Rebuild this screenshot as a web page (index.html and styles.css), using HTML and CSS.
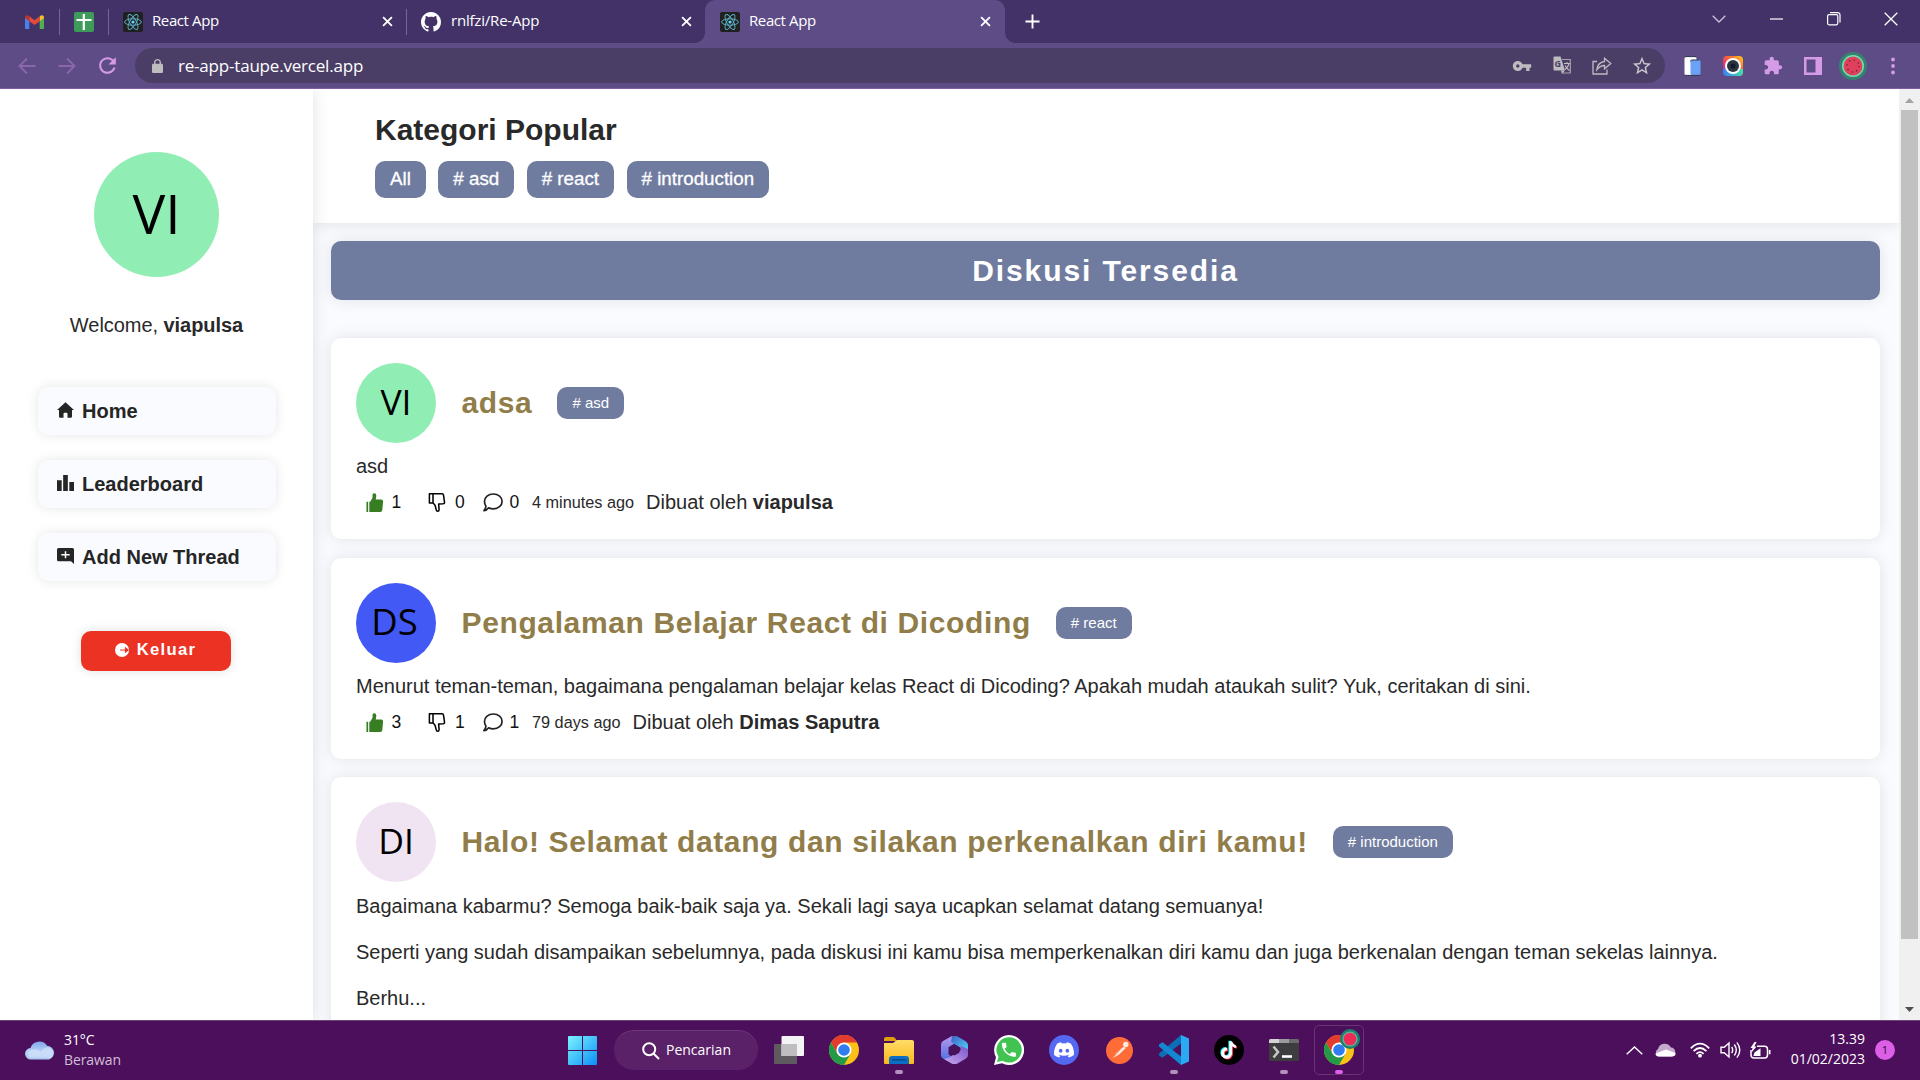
FILE: index.html
```html
<!DOCTYPE html>
<html lang="id">
<head>
<meta charset="utf-8">
<title>React App</title>
<link rel="stylesheet" href="styles.css">
</head>
<body>
<svg class="defs" width="0" height="0" aria-hidden="true">
  <defs>
    <linearGradient id="win" x1="0" y1="0" x2="1" y2="1"><stop offset="0" stop-color="#7df3ff"/><stop offset="1" stop-color="#0a8ff5"/></linearGradient>
    <linearGradient id="folder" x1="0" y1="0" x2="0" y2="1"><stop offset="0" stop-color="#ffdc69"/><stop offset="1" stop-color="#fbb81a"/></linearGradient>
    <linearGradient id="cloud" x1="0" y1="0" x2="0" y2="1"><stop offset="0" stop-color="#7fa6ef"/><stop offset=".55" stop-color="#b9d3f5"/><stop offset="1" stop-color="#a9c6f3"/></linearGradient>
    <linearGradient id="officeA" x1="0" y1="0" x2="0" y2="1"><stop offset="0" stop-color="#b79af0"/><stop offset="1" stop-color="#4b6fe0"/></linearGradient>
    <linearGradient id="officeB" x1="0" y1="0" x2="1" y2="1"><stop offset="0" stop-color="#3c62c8"/><stop offset="1" stop-color="#52d6fa"/></linearGradient>
    <linearGradient id="officeC" x1="0" y1="1" x2="1" y2="0"><stop offset="0" stop-color="#c9a8f2"/><stop offset="1" stop-color="#7a56c8"/></linearGradient>
    <linearGradient id="cam" x1="0" y1="1" x2="1" y2="0"><stop offset="0" stop-color="#7a3df0"/><stop offset=".35" stop-color="#e8356a"/><stop offset=".7" stop-color="#ff7a2a"/><stop offset="1" stop-color="#ffd21f"/></linearGradient>
    <linearGradient id="camB" x1="0" y1="0" x2="1" y2="0"><stop offset="0" stop-color="#3d7df5"/><stop offset="1" stop-color="#3fe0a8"/></linearGradient>
    <symbol id="react" viewBox="0 0 20 20">
      <rect width="20" height="20" rx="2" fill="#202020"/>
      <g fill="none" stroke="#5fb9d0" stroke-width=".9"><ellipse cx="10" cy="10" rx="8.4" ry="3.2"/><ellipse cx="10" cy="10" rx="8.4" ry="3.2" transform="rotate(60 10 10)"/><ellipse cx="10" cy="10" rx="8.4" ry="3.2" transform="rotate(120 10 10)"/></g>
      <circle cx="10" cy="10" r="1.6" fill="#61dafb"/>
    </symbol>
    <symbol id="close" viewBox="0 0 12 12"><path d="M1.2 1.2l9.6 9.6M10.8 1.2l-9.6 9.6" stroke="#fff" stroke-width="2" fill="none"/></symbol>
    <symbol id="chrome" viewBox="0 0 30 30">
      <circle cx="15" cy="15" r="15" fill="#fbc116"/>
      <path d="M2 7.5A15 15 0 0 1 28 7.5H15L8.5 18.8z" fill="#e33b2e"/>
      <path d="M2 7.5A15 15 0 0 0 15 30L21.5 18.8 8.5 18.8z" fill="#229a48"/>
      <circle cx="15" cy="15" r="7.6" fill="#fff"/><circle cx="15" cy="15" r="5.8" fill="#2f7df0"/>
    </symbol>
    <symbol id="note" viewBox="0 0 15 18"><path fill="currentColor" d="M9 0h2c.15.7.5 1.6 1.2 2.5C12.900 3.400 13.800 4 15 4v2.500c-1.700 0-3-.8-4-1.800V12a5.500 5.500 0 1 1-5-5.500V9.300A2.600 2.600 0 1 0 8.200 12V0z"/></symbol>
    <symbol id="thumb-up" viewBox="0 0 18 20"><path d="M0 9.2h1.8V20H0zM3 9.2h.9L6.4 5V2.1Q6.4.3 8 .3q2.4 0 2.4 2.6L9.8 6.8h5.700q2.200 0 2 2.200l-.8 8.900q-.3 2.100-2.100 2.100H3z" fill="#377e22"/></symbol>
    <symbol id="thumb-down" viewBox="0 0 18 20"><path d="M1 .9h13.200q1.500 0 1.700 1.500l1 7.200q.2 1.700-1.500 1.800l-4.700.1.500 5.800q0 1.900-1.500 1.900-1.200 0-1.500-1.400l-1-4.100q-.4-1.600-2.200-3.100H1zM4.800.9v9.700" fill="none" stroke="#000" stroke-width="1.600" stroke-linejoin="round"/></symbol>
    <symbol id="comment" viewBox="0 0 20 19"><path d="M10.3 1c5 0 8.800 3.200 8.800 7.400s-3.800 7.500-8.800 7.500c-1.700 0-3.300-.4-4.600-1.100C4.500 16.400 2.800 17.500.9 17.700c1.300-1.400 1.900-3 2-4.600C2 11.800 1.500 10.200 1.500 8.400 1.500 4.200 5.300 1 10.300 1z" fill="none" stroke="#222" stroke-width="1.700" stroke-linejoin="round"/></symbol>
  </defs>
</svg>

<header class="browser">
  <div class="tabstrip">
    <div class="pin pin-mail">
      <svg width="19" height="14" viewBox="0 0 19 14"><path d="M0 2v12h4.300V5.500z" fill="#4a80ec"/><path d="M19 2v12h-4.300V5.500z" fill="#4fae50"/><path d="M14.700 1.300Q17-.8 18.600 1q.4.6.4 2l-4.300 3.200z" fill="#f5bf2e"/><path d="M4.300 1.300Q2-.8.400 1 0 1.600 0 3l4.300 3.200z" fill="#b9352c"/><path d="M4.300 1.300l5.200 3.900 5.200-3.900v4.900L9.500 10.100 4.300 6.200z" fill="#e34a3c"/></svg>
    </div>
    <div class="pin pin-sheet">
      <svg width="20" height="20" viewBox="0 0 20 20"><rect width="20" height="20" rx="2" fill="#3f9b5a"/><path d="M9.800 2v16M2.500 8h15" stroke="#fff" stroke-width="2.200"/></svg>
    </div>
    <div class="tab tab-a">
      <svg class="favicon"><use href="#react"/></svg><span class="tab-title">React App</span><svg class="tab-close"><use href="#close"/></svg>
    </div>
    <div class="tab tab-b">
      <svg class="favicon" viewBox="0 0 16 16"><path fill="#fff" d="M8 0C3.580 0 0 3.580 0 8c0 3.540 2.290 6.530 5.470 7.590.4.070.55-.17.55-.38 0-.19-.01-.82-.01-1.490-2.010.37-2.530-.49-2.690-.94-.09-.23-.48-.94-.82-1.130-.28-.15-.68-.52-.01-.53.63-.01 1.080.58 1.230.82.72 1.210 1.870.87 2.330.66.070-.52.280-.87.510-1.070-1.780-.2-3.640-.89-3.640-3.950 0-.87.310-1.590.820-2.150-.080-.2-.36-1.020.080-2.120 0 0 .67-.21 2.200.820.640-.18 1.320-.27 2-.27s1.360.09 2 .27c1.530-1.040 2.200-.82 2.200-.82.440 1.100.160 1.920.080 2.120.510.560.820 1.270.820 2.150 0 3.070-1.870 3.750-3.650 3.950.290.250.540.730.540 1.480 0 1.070-.01 1.930-.01 2.200 0 .21.150.46.550.38A8.010 8.010 0 0 0 16 8c0-4.420-3.580-8-8-8z"/></svg><span class="tab-title">rnlfzi/Re-App</span><svg class="tab-close"><use href="#close"/></svg>
    </div>
    <div class="tab tab-active">
      <svg class="favicon"><use href="#react"/></svg><span class="tab-title">React App</span><svg class="tab-close"><use href="#close"/></svg>
    </div>
    <svg class="new-tab" viewBox="0 0 16 16"><path d="M8 .5v15M.5 8h15" stroke="#fff" stroke-width="2"/></svg>
    <div class="window-controls">
      <span><svg width="14" height="8" viewBox="0 0 14 8"><path d="M.7.700L7 7 13.300.700" stroke="#c9c1dc" stroke-width="1.300" fill="none"/></svg></span>
      <span><svg width="13" height="2" viewBox="0 0 13 2"><path d="M0 1h13" stroke="#fff" stroke-width="1.200"/></svg></span>
      <span><svg width="14" height="14" viewBox="0 0 14 14"><rect x=".6" y="2.600" width="10.200" height="10.200" rx="1.500" fill="none" stroke="#fff" stroke-width="1.200"/><path d="M3 .6h7.500Q13 .6 13 3v7.500" fill="none" stroke="#fff" stroke-width="1.200"/></svg></span>
      <span><svg width="14" height="14" viewBox="0 0 14 14"><path d="M.7.700l12.600 12.600M13.300.700L.7 13.300" stroke="#fff" stroke-width="1.300"/></svg></span>
    </div>
  </div>
  <div class="toolbar">
    <div class="nav-buttons">
      <span><svg width="18" height="18" viewBox="0 0 18 18"><path d="M17.500 9H2M9 1.500L1.500 9 9 16.500" fill="none" stroke="#8a66ab" stroke-width="1.900"/></svg></span>
      <span><svg width="18" height="18" viewBox="0 0 18 18"><path d="M.5 9H16M9 1.500L16.500 9 9 16.500" fill="none" stroke="#8a66ab" stroke-width="1.900"/></svg></span>
      <span><svg width="25" height="25" viewBox="0 0 24 24"><path fill="#d59be6" d="M17.650 6.350C16.200 4.900 14.210 4 12 4c-4.420 0-7.990 3.580-7.990 8s3.570 8 7.990 8c3.730 0 6.840-2.550 7.730-6h-2.080c-.82 2.330-3.040 4-5.650 4-3.310 0-6-2.690-6-6s2.690-6 6-6c1.660 0 3.140.69 4.220 1.780L13 11h7V4l-2.350 2.350z"/></svg></span>
    </div>
    <div class="omnibox">
      <svg width="11" height="14" viewBox="4 1 16 21" preserveAspectRatio="none"><path fill="#bdbdbd" d="M18 8h-1V6c0-2.760-2.240-5-5-5S7 3.240 7 6v2H6c-1.100 0-2 .9-2 2v10c0 1.100.9 2 2 2h12c1.100 0 2-.9 2-2V10c0-1.100-.9-2-2-2zM9 8V6c0-1.660 1.340-3 3-3s3 1.340 3 3v2z"/></svg>
      <span class="url">re-app-taupe.vercel.app</span>
      <div class="omni-actions">
        <span><svg width="20" height="20" viewBox="0 0 24 24"><path fill="#bfbcc0" d="M12.650 10C11.830 7.670 9.610 6 7 6c-3.310 0-6 2.690-6 6s2.690 6 6 6c2.610 0 4.830-1.670 5.650-4H17v4h4v-4h2v-4H12.650zM7 14c-1.100 0-2-.9-2-2s.9-2 2-2 2 .9 2 2-.9 2-2 2z"/></svg></span>
        <span><svg width="19" height="19" viewBox="0 0 19 19"><path d="M9 3.500h8.300V17H9.500" fill="none" stroke="#a5a1ab" stroke-width="1.200"/><path d="M1.500.5h6L12 14.500H1.500q-1 0-1-1v-12q0-1 1-1z" fill="#bfbcc0"/><path d="M8 14.500h4l-3 3.500z" fill="#bfbcc0"/><text class="g-mark" x="1.500" y="10.500">G</text><path d="M11 7.500h6M14 6v1.500M16 7.500q-1 4-4 6M12 9.500q1.500 3 4.500 5" stroke="#bfbcc0" stroke-width="1.100" fill="none"/></svg></span>
        <span><svg width="20" height="18" viewBox="0 0 20 18"><path d="M5 4.500H1V17h14v-4.500" fill="none" stroke="#bfbcc0" stroke-width="1.300"/><path d="M12.500 1.200L18.800 6.500l-6.300 5.300V8.500Q8 8.500 4.800 12.800 5.500 5.500 12.500 4.500z" fill="none" stroke="#bfbcc0" stroke-width="1.300"/></svg></span>
        <span><svg width="22" height="22" viewBox="0 0 24 24"><path fill="#c9c6cb" d="M22 9.240l-7.190-.62L12 2 9.190 8.630 2 9.240l5.460 4.730L5.820 21 12 17.270 18.180 21l-1.630-7.030L22 9.240zM12 15.400l-3.760 2.270 1-4.280-3.320-2.880 4.380-.38L12 6.100l1.710 4.040 4.380.38-3.320 2.880 1 4.280L12 15.400z"/></svg></span>
      </div>
    </div>
    <div class="extensions">
      <span><svg width="17" height="20" viewBox="0 0 17 20"><rect x=".5" y="1" width="12" height="18" rx="1.500" fill="#fff"/><path d="M1 .6h11" stroke="#343b52" stroke-width="1"/><rect x="6.500" y="4" width="10" height="15" rx="1.500" fill="#6ba2f5"/><path d="M6.500 5.500q0-1.500 1.500-1.500h7" stroke="#343b52" fill="none"/><path d="M1 19.400h15" stroke="#343b52"/></svg></span>
      <span><svg width="20" height="20" viewBox="0 0 20 20"><rect width="20" height="20" rx="4" fill="url(#cam)"/><path d="M0 13h20v3q0 4-4 4H4q-4 0-4-4z" fill="url(#camB)"/><circle cx="10" cy="10" r="8" fill="#fff"/><circle cx="10" cy="10" r="6" fill="#2d3440"/><circle cx="10" cy="10" r="2.500" fill="#121b2a"/></svg></span>
      <span><svg width="20" height="20" viewBox="0 0 24 24"><path fill="#d59be6" d="M20.500 11H19V7c0-1.100-.9-2-2-2h-4V3.500C13 2.120 11.880 1 10.500 1S8 2.120 8 3.500V5H4c-1.100 0-1.990.9-1.990 2v3.800H3.500c1.490 0 2.700 1.210 2.700 2.700s-1.210 2.700-2.700 2.700H2V20c0 1.100.9 2 2 2h3.800v-1.500c0-1.490 1.210-2.700 2.700-2.700 1.490 0 2.700 1.210 2.700 2.700V22H17c1.100 0 2-.9 2-2v-4h1.500c1.380 0 2.500-1.120 2.500-2.500S21.880 11 20.500 11z"/></svg></span>
      <span><svg width="18" height="18" viewBox="0 0 18 18"><path d="M0 0h18v18H0zM2.500 2.500v13h9v-13z" fill="#d59be6" fill-rule="evenodd"/></svg></span>
      <span><svg width="28" height="28" viewBox="0 0 28 28"><circle cx="14" cy="14" r="14" fill="#35826f"/><circle cx="14" cy="14" r="11" fill="#6fe0b4"/><circle cx="14" cy="14" r="9.500" fill="#e0405c"/><circle cx="14" cy="14" r="6" fill="none" stroke="#6b1f33" stroke-width="1.300" stroke-dasharray="1.300 3.410"/></svg></span>
      <span><svg width="4" height="18" viewBox="0 0 4 18"><g fill="#d59be6"><circle cx="2" cy="2.500" r="1.900"/><circle cx="2" cy="9" r="1.900"/><circle cx="2" cy="15.500" r="1.900"/></g></svg></span>
    </div>
  </div>
</header>

<div class="viewport">
  <aside class="sidebar">
    <div class="avatar avatar-lg">VI</div>
    <p class="welcome">Welcome, <b>viapulsa</b></p>
    <nav class="menu">
      <a class="menu-item"><svg width="17" height="16" viewBox="0 0 17 16"><path d="M8.500.3L17 8h-2v6.500q0 1.200-1.200 1.200h-3.300v-4q0-1-1-1h-2q-1 0-1 1v4H3.200Q2 15.700 2 14.500V8H0z" fill="#252525"/></svg>Home</a>
      <a class="menu-item"><svg width="17" height="16" viewBox="2 3 20 18" preserveAspectRatio="none"><path fill="#252525" d="M7.500 21H2V9h5.500v12zm7.250-18h-5.500v18h5.500V3zM22 11h-5.500v10H22V11z"/></svg>Leaderboard</a>
      <a class="menu-item"><svg width="17" height="16" viewBox="0 0 17 16"><path d="M1.500 0h14Q17 0 17 1.500V16l-3-2.800H1.500Q0 13.200 0 11.700V1.500Q0 0 1.500 0z" fill="#252525"/><path d="M8.500 3.200v7M4.300 6.700h8.400" stroke="#fff" stroke-width="1.500"/></svg>Add New Thread</a>
    </nav>
    <button class="logout"><svg width="14" height="14" viewBox="0 0 14 14"><circle cx="7" cy="7" r="7" fill="#fff"/><path d="M5 7h7.500M10.500 5l2.500 2-2.500 2z" stroke="#eb3223" stroke-width="1.200" fill="#eb3223"/></svg>Keluar</button>
  </aside>

  <main class="content">
    <section class="categories">
      <h2 class="categories-title">Kategori Popular</h2>
      <div class="chips"><span class="chip">All</span><span class="chip"># asd</span><span class="chip"># react</span><span class="chip"># introduction</span></div>
    </section>
    <h2 class="banner">Diskusi Tersedia</h2>

    <article class="card">
      <div class="card-head"><div class="avatar avatar-green">VI</div><h3 class="card-title">adsa</h3><span class="tag"># asd</span></div>
      <p class="card-text">asd</p>
      <div class="stats">
        <span class="like"><svg width="18" height="19"><use href="#thumb-up"/></svg>1</span>
        <span class="dislike"><svg width="18" height="19"><use href="#thumb-down"/></svg>0</span>
        <span class="comments"><svg width="20" height="19"><use href="#comment"/></svg>0</span>
        <span class="time">4 minutes ago</span>
        <span class="author">Dibuat oleh <b>viapulsa</b></span>
      </div>
    </article>

    <article class="card">
      <div class="card-head"><div class="avatar avatar-blue">DS</div><h3 class="card-title">Pengalaman Belajar React di Dicoding</h3><span class="tag"># react</span></div>
      <p class="card-text">Menurut teman-teman, bagaimana pengalaman belajar kelas React di Dicoding? Apakah mudah ataukah sulit? Yuk, ceritakan di sini.</p>
      <div class="stats">
        <span class="like"><svg width="18" height="19"><use href="#thumb-up"/></svg>3</span>
        <span class="dislike"><svg width="18" height="19"><use href="#thumb-down"/></svg>1</span>
        <span class="comments"><svg width="20" height="19"><use href="#comment"/></svg>1</span>
        <span class="time">79 days ago</span>
        <span class="author">Dibuat oleh <b>Dimas Saputra</b></span>
      </div>
    </article>

    <article class="card card-last">
      <div class="card-head"><div class="avatar avatar-pink">DI</div><h3 class="card-title">Halo! Selamat datang dan silakan perkenalkan diri kamu!</h3><span class="tag"># introduction</span></div>
      <p class="card-text">Bagaimana kabarmu? Semoga baik-baik saja ya. Sekali lagi saya ucapkan selamat datang semuanya!</p>
      <p class="card-text">Seperti yang sudah disampaikan sebelumnya, pada diskusi ini kamu bisa memperkenalkan diri kamu dan juga berkenalan dengan teman sekelas lainnya.</p>
      <p class="card-text">Berhu...</p>
    </article>
  </main>

  <div class="scrollbar">
    <svg width="9" height="5" viewBox="0 0 9 5"><path d="M4.500 0L9 5H0z" fill="#a3a3a3"/></svg>
    <div class="thumb"></div>
    <svg width="9" height="5" viewBox="0 0 9 5"><path d="M0 0h9L4.500 5z" fill="#505050"/></svg>
  </div>
</div>

<footer class="taskbar">
  <div class="weather">
    <svg width="30" height="20" viewBox="0 0 30 20"><path d="M6 19.500a5.700 5.700 0 0 1-.5-11.400A9 8.500 0 0 1 22 5.800a7 7 0 0 1 2 13.700z" fill="url(#cloud)"/><path d="M4 17.500q-3-6 4-8 6-.5 8 3 4-8 10-4 4 5 0 9.500z" fill="#d4e3fa" opacity=".65"/></svg>
    <div class="weather-text"><span>31°C</span><span class="dim">Berawan</span></div>
  </div>

  <div class="apps">
    <span class="start"><svg width="29" height="29" viewBox="0 0 29 29"><path d="M1 0h13v14H0V1q0-1 1-1zM15 0h13q1 0 1 1v13H15zM0 15h14v14H1q-1 0-1-1zM15 15h14v13q0 1-1 1H15z" fill="url(#win)"/></svg></span>
    <div class="search"><svg width="18" height="18" viewBox="0 0 18 18"><circle cx="7.200" cy="7.200" r="6" fill="none" stroke="#fff" stroke-width="2"/><path d="M11.500 11.500l5.500 5.500" stroke="#fff" stroke-width="2"/></svg><span class="search-label">Pencarian</span></div>
    <span class="app"><svg width="30" height="28" viewBox="0 0 30 28"><rect y="8" width="23" height="20" rx="1" fill="#5e5a60"/><rect x="7.500" width="22.500" height="20" rx="1" fill="#f3f2f4"/><path d="M7.500 8H23v12H7.500z" fill="#c0bdc1"/></svg></span>
    <span class="app"><svg width="30" height="30"><use href="#chrome"/></svg></span>
    <span class="app running"><svg width="30" height="27" viewBox="0 0 30 27"><path d="M0 2q0-2 2-2h7q1 0 2 1l2 3H0z" fill="#e0a00c"/><path d="M0 6h9l4-3h15q2 0 2 2v21q0 1-1 1H1q-1 0-1-1z" fill="url(#folder)"/><path d="M5 27v-5q0-3 3-3h14q3 0 3 3v5z" fill="#0a6fc4"/><path d="M8 22.800h14" stroke="#06437f" stroke-width="1.300"/></svg></span>
    <span class="app"><svg width="27" height="28" viewBox="0 0 27 28"><path d="M11 0L2 5Q0 6.200 0 8.500v11Q0 21.500 2 22.500l5 2.700 3-5-2.500-2v-7L16 6z" fill="url(#officeA)"/><path d="M11 0q3-1 6 .8L25 5.500Q27 7 27 9v7l-7-4-10-6z" fill="url(#officeB)"/><path d="M27 13v6q0 2.300-2 3.500l-8.500 5q-3 1.500-6 0L3 23l5-1.500 11.500-7V10z" fill="url(#officeC)"/><path d="M13.500 8.500l5 3v5l-5 3-5-3v-5z" fill="#46125c"/></svg></span>
    <span class="app"><svg width="30" height="30" viewBox="0 0 30 30"><path d="M15 0a15 15 0 1 1-7 28.200L0 30l2-7.700A15 15 0 0 1 15 0z" fill="#fff"/><path d="M15 2.200a12.700 12.700 0 1 1-6.500 23.600L3 27l1.500-5.200A12.700 12.700 0 0 1 15 2.200z" fill="#40c351"/><path transform="translate(5.500 5.500) scale(.78)" fill="#fff" d="M6.620 10.790c1.440 2.830 3.760 5.140 6.590 6.590l2.200-2.200c.27-.27.67-.36 1.020-.24 1.120.37 2.330.57 3.570.57.55 0 1 .45 1 1V20c0 .55-.45 1-1 1-9.390 0-17-7.610-17-17 0-.55.45-1 1-1h3.500c.55 0 1 .45 1 1 0 1.250.2 2.450.57 3.570.11.35.030.74-.25 1.020l-2.200 2.200z"/></svg></span>
    <span class="app"><svg width="30" height="30" viewBox="0 0 30 30"><circle cx="15" cy="15" r="15" fill="#5468f2"/><path transform="translate(5 5) scale(1.250)" fill="#fff" fill-rule="evenodd" d="M13.545 2.907a13.227 13.227 0 0 0-3.257-1.011.05.05 0 0 0-.052.025c-.141.25-.297.577-.406.833a12.190 12.190 0 0 0-3.658 0 8.258 8.258 0 0 0-.412-.833.051.051 0 0 0-.052-.025c-1.125.194-2.220.534-3.257 1.011a.041.041 0 0 0-.021.018C.356 6.024-.213 9.047.066 12.032c.001.014.010.028.021.037a13.276 13.276 0 0 0 3.995 2.020.05.05 0 0 0 .056-.019c.308-.42.582-.863.818-1.329a.05.05 0 0 0-.028-.07 8.875 8.875 0 0 1-1.248-.595.05.05 0 0 1-.005-.085c.084-.063.168-.129.248-.195a.05.05 0 0 1 .051-.007c2.619 1.196 5.454 1.196 8.041 0a.052.052 0 0 1 .053.007c.08.066.164.132.248.195a.051.051 0 0 1-.004.085 8.254 8.254 0 0 1-1.249.594.05.05 0 0 0-.027.071c.24.465.515.909.817 1.329a.05.05 0 0 0 .056.019 13.235 13.235 0 0 0 4.001-2.020.049.049 0 0 0 .021-.037c.334-3.451-.559-6.449-2.366-9.106a.034.034 0 0 0-.020-.019zM5.347 10.214c-.789 0-1.438-.724-1.438-1.612 0-.889.637-1.613 1.438-1.613.807 0 1.450.73 1.438 1.613 0 .888-.637 1.612-1.438 1.612zm5.316 0c-.788 0-1.438-.724-1.438-1.612 0-.889.637-1.613 1.438-1.613.807 0 1.451.73 1.438 1.613 0 .888-.631 1.612-1.438 1.612z"/></svg></span>
    <span class="app"><svg width="27" height="27" viewBox="0 0 27 27"><circle cx="13.500" cy="13.500" r="13.500" fill="#ff6c37"/><circle cx="19.800" cy="7.500" r="2.700" fill="#fbe9e2"/><path d="M18 9.500l1.700 1.800L13 17.500l-6.500 4 4-6z" fill="#fbe9e2"/><path d="M6.500 21.300l7-8" stroke="#ff6c37" stroke-width=".8"/></svg></span>
    <span class="app running"><svg width="30" height="30" viewBox="0 0 30 30"><path d="M22 0v8.500L3.500 22.700 0 20.500v-2z" fill="#0c6fb6"/><path d="M22 30v-8.500L3.500 7.300 0 9.500v2z" fill="#1287d2"/><path d="M22 0l8 3.500v23L22 30z" fill="#2ba9f2"/></svg></span>
    <span class="app"><svg width="30" height="30" viewBox="0 0 30 30"><circle cx="15" cy="15" r="15" fill="#000"/><use href="#note" x="6.200" y="5.500" width="15" height="18" color="#25f4ee"/><use href="#note" x="8" y="7" width="15" height="18" color="#fe2c55"/><use href="#note" x="7.100" y="6.200" width="15" height="18" color="#fff"/></svg></span>
    <span class="app running"><svg width="30" height="22" viewBox="0 0 30 22"><rect width="30" height="22" rx="1.500" fill="#3d3d3f"/><path d="M1.500 0H10v4H0V1.500Q0 0 1.500 0z" fill="#d4d4d4"/><path d="M10 0h10v4H10z" fill="#9b9b9b"/><path d="M20 0h8.500Q30 0 30 1.500V4H20z" fill="#6b6b6b"/><path d="M4.500 7.500L9 13l-4.500 5.500" fill="none" stroke="#c4c4c4" stroke-width="2.600"/><path d="M13 17.500h10" stroke="#fff" stroke-width="2.600"/></svg></span>
    <span class="app running current"><svg width="30" height="30"><use href="#chrome"/></svg><svg class="profile-dot" width="20" height="20" viewBox="0 0 20 20"><circle cx="10" cy="10" r="10" fill="#1c7f71"/><circle cx="10" cy="10" r="7.600" fill="#5fb59a"/><circle cx="10" cy="10" r="6.300" fill="#ee2c55"/></svg></span>
  </div>

  <div class="tray">
    <svg width="17" height="9" viewBox="0 0 17 9"><path d="M.7 8.300l7.800-7.300 7.800 7.300" stroke="#fff" stroke-width="1.400" fill="none"/></svg>
    <svg class="tray-cloud" width="21" height="14" viewBox="0 0 21 14"><path d="M4 13.500A4 4 0 0 1 3 6 7 7 0 0 1 16 4.500a4.600 4.600 0 0 1 1 9z" fill="#c3a9cc"/><path d="M3 13.500q-3-1-2.300-3L11 6.500l9.500 3.500q.5 3-3 3.500z" fill="#fff"/></svg>
    <svg class="tray-wifi" width="20" height="16" viewBox="0 0 20 16"><g fill="none" stroke="#fff" stroke-width="1.700"><path d="M.8 6.300q9.200-9.300 18.400 0"/><path d="M3.600 9.100q6.400-6.200 12.800 0"/><path d="M6.400 11.800q3.600-3.400 7.200 0"/></g><circle cx="10" cy="13.700" r="1.900" fill="#fff"/></svg>
    <svg class="tray-vol" width="21" height="18" viewBox="0 0 21 18"><g fill="none" stroke="#fff" stroke-width="1.400"><path d="M1 6.300h3.200L9 2v14l-4.800-4.300H1z"/><path d="M11.700 6q2 3 0 6M14.300 3.500q4 5.500 0 11M16.900 1.300q5.800 7.700 0 15.400"/></g></svg>
    <svg class="tray-battery" width="21" height="17" viewBox="0 0 21 17"><path d="M7 4.300h7.500q3 0 3 3V13q0 3-3 3H4q-3 0-3-3V8" fill="none" stroke="#fff" stroke-width="1.500"/><path d="M18.800 8h1.700v4.300h-1.700zM3.500 13.500l1-3 6-4.200v7.700H3.500z" fill="#fff"/><path d="M4.500 0L.5 6h2L1.500 10.500 6.500 4.500h-2.200L6.500 0z" fill="#fff"/></svg>
    <div class="clock"><span>13.39</span><span>01/02/2023</span></div>
    <span class="badge">1</span>
  </div>
</footer>
</body>
</html>
```
FILE: styles.css
```css
* { box-sizing: border-box; }

body {
  margin: 0;
  width: 1920px;
  height: 1080px;
  overflow: hidden;
  display: flex;
  flex-direction: column;
  font-family: "Liberation Sans", Arial, sans-serif;
  color: #292929;
}

svg { display: block; flex: none; }
.defs { position: absolute; }
h2, h3, p { margin: 0; }

/* Browser chrome */
.browser {
  flex: none;
  height: 89px;
  background: #5d4c86;
  border-bottom: 1px solid #7b5da0;
  font-family: "Open Sans", "Noto Sans", sans-serif;
}
.tabstrip {
  height: 43px;
  display: flex;
  align-items: center;
  background: #423268;
}
.pin { height: 26px; display: flex; align-items: center; border-right: 1px solid #75678f; }
.pin-mail { width: 60px; padding-left: 25px; }
.pin-sheet { width: 49px; padding-left: 14px; }
.tab { height: 26px; display: flex; align-items: center; padding-left: 14px; }
.tab-a { width: 298px; border-right: 1px solid #75678f; }
.tab-b { width: 298px; }
.favicon { width: 20px; height: 20px; }
.tab-title { margin-left: 9px; flex: 1; padding-bottom: 3px; color: #fff; font-size: 15px; letter-spacing: -0.4px; white-space: nowrap; }
.tab-b .tab-title { margin-left: 10px; letter-spacing: -0.2px; }
.tab-close { width: 11px; height: 11px; margin-right: 13px; }
.tab-active {
  position: relative;
  width: 300px;
  height: 43px;
  padding-left: 15px;
  background: #5d4c86;
  border-radius: 10px 10px 0 0;
}
.tab-active .tab-close { margin-right: 14px; }
.tab-active::before, .tab-active::after {
  content: "";
  position: absolute;
  bottom: 0;
  width: 10px;
  height: 10px;
}
.tab-active::before { left: -10px; background: radial-gradient(circle at 0 0, transparent 9.5px, #5d4c86 10px); }
.tab-active::after { right: -10px; background: radial-gradient(circle at 100% 0, transparent 9.5px, #5d4c86 10px); }
.new-tab { width: 15px; height: 15px; margin-left: 20px; }
.window-controls { margin-left: auto; display: flex; height: 43px; padding-bottom: 6px; }
.window-controls span { width: 57.4px; display: flex; align-items: center; justify-content: center; }

.toolbar { height: 45px; display: flex; align-items: center; }
.nav-buttons { display: flex; width: 135px; padding-left: 7px; }
.nav-buttons span { width: 40.3px; display: flex; align-items: center; justify-content: center; }
.omnibox {
  width: 1530px;
  height: 35px;
  padding-left: 17px;
  display: flex;
  align-items: center;
  background: #4a3e66;
  border-radius: 18px;
}
.url { margin-left: 15px; padding-bottom: 1px; color: #fff; font-size: 17px; letter-spacing: -0.2px; }
.omni-actions { margin-left: auto; display: flex; padding-right: 3px; }
.omni-actions span { width: 40px; display: flex; align-items: center; justify-content: center; }
.g-mark { font: 700 9px "Open Sans", sans-serif; fill: #4a3e66; }
.extensions { display: flex; padding-left: 7.5px; }
.extensions span { width: 40px; display: flex; align-items: center; justify-content: center; }

/* Web page */
.viewport { height: 931px; flex: none; display: flex; background: #fafbff; overflow: hidden; }

.sidebar {
  position: relative;
  z-index: 2;
  width: 313px;
  flex: none;
  padding-top: 63px;
  display: flex;
  flex-direction: column;
  align-items: center;
  background: #fff;
  box-shadow: 0 0 16px rgba(0, 0, 0, 0.12);
}
.avatar {
  flex: none;
  display: flex;
  align-items: center;
  justify-content: center;
  width: 80px;
  height: 80px;
  padding-bottom: 3px;
  border-radius: 50%;
  color: #000;
  font: 35.5px/1 "Open Sans", "Noto Sans", sans-serif;
}
.avatar-lg { width: 125px; height: 125px; padding-bottom: 4px; font-size: 55px; background: #90eeb4; }
.avatar-green { background: #90eeb4; }
.avatar-blue { background: #4259f5; font-size: 36.5px; padding-right: 3px; }
.avatar-pink { background: #f1e4f2; }
.welcome { margin-top: 36px; font-size: 20px; line-height: 24px; letter-spacing: -0.05px; }
.menu { margin-top: 50px; display: flex; flex-direction: column; gap: 25px; }
.menu-item {
  width: 238px;
  height: 48px;
  padding-left: 19px;
  display: flex;
  align-items: center;
  gap: 8.5px;
  background: #fafbff;
  border-radius: 10px;
  box-shadow: 0 0 12px rgba(0, 0, 0, 0.1);
  font-size: 20px;
  font-weight: 700;
  color: #252525;
}
.menu-item svg { margin-bottom: 2px; }
.logout {
  margin: 50px 2px 0 0;
  width: 150px;
  height: 40px;
  padding: 0 0 2px;
  border: 0;
  display: flex;
  align-items: center;
  justify-content: center;
  gap: 8px;
  border-radius: 10px;
  background: #eb3223;
  box-shadow: 0 0 12px rgba(0, 0, 0, 0.12);
  color: #fff;
  font: 700 16.67px "Liberation Sans", Arial, sans-serif;
  letter-spacing: 1.25px;
}

.content { width: 1586px; flex: none; }
.categories {
  height: 134px;
  padding: 24px 0 0 62px;
  background: #fff;
  box-shadow: 0 0 16px rgba(0, 0, 0, 0.12);
}
.categories-title { font-size: 30px; line-height: 34px; }
.chips { margin-top: 14px; display: flex; gap: 12.5px; }
.chip {
  height: 37px;
  padding: 0 15px;
  line-height: 35px;
  border-radius: 10px;
  background: #707c9f;
  color: #fff;
  font-size: 18.75px;
  -webkit-text-stroke: 0.3px #fff;
}
.banner {
  margin: 18px 19px 38px 18px;
  height: 59px;
  line-height: 59px;
  text-align: center;
  border-radius: 10px;
  background: #707c9f;
  box-shadow: 0 0 16px rgba(0, 0, 0, 0.1);
  color: #fff;
  font-size: 30px;
  letter-spacing: 1.9px;
}
.card {
  margin: 0 19px 18.5px 18px;
  height: 201px;
  padding: 25px;
  border-radius: 10px;
  background: #fff;
  box-shadow: 0 0 16px rgba(0, 0, 0, 0.1);
}
.card-last { height: 320px; }
.card-head { display: flex; align-items: center; }
.card-title { margin-left: 25.5px; font-size: 30px; line-height: 36px; letter-spacing: 0.625px; color: #917d49; }
.tag {
  margin-left: 25px;
  height: 32px;
  padding: 0 15px;
  line-height: 32px;
  border-radius: 10px;
  background: #707c9f;
  color: #fff;
  font-size: 15px;
}
.card-text { margin-top: 11px; height: 24px; font-size: 20px; line-height: 24px; white-space: nowrap; }
.card-last .card-text { margin-top: 12px; }
.card-last .card-text + .card-text { margin-top: 22px; }
.stats { margin-top: 13px; height: 23px; display: flex; align-items: center; }
.stats span { display: flex; align-items: center; font-size: 17.5px; color: #111; }
.like { width: 72px; padding-left: 9.5px; gap: 8px; }
.dislike { width: 55px; gap: 9px; }
.comments { width: 49px; gap: 6.5px; }
.stats .time { font-size: 16.25px; margin-right: 12px; color: #292929; }
.stats .author { display: block; font-size: 20px; color: #292929; }

.scrollbar {
  width: 21px;
  flex: none;
  display: flex;
  flex-direction: column;
  align-items: center;
  padding: 9px 0 8px;
  background: #f0f0f0;
}
.thumb { width: 17px; height: 829px; margin: 7px 0 auto; background: #c1c1c1; }

/* Taskbar */
.taskbar {
  height: 60px;
  flex: none;
  display: flex;
  align-items: center;
  padding-bottom: 1px;
  background: #4c0f5c;
  border-top: 1px solid #6b4478;
  color: #fff;
  font-family: "Open Sans", "Noto Sans", sans-serif;
  font-size: 14px;
}
.weather { width: 554px; padding-left: 25px; display: flex; align-items: center; gap: 9px; }
.weather-text { display: flex; flex-direction: column; padding-bottom: 1px; line-height: 20px; letter-spacing: -0.1px; }
.dim { color: #d0bfd5; }
.apps { display: flex; align-items: center; }
.start { width: 60px; padding-left: 14px; }
.search {
  width: 144px;
  height: 40px;
  margin-right: 3.5px;
  padding-left: 28px;
  display: flex;
  align-items: center;
  gap: 6px;
  border-radius: 20px;
  border-top: 1px solid #6d3a7b;
  background: #5b2168;
}
.search-label { padding-bottom: 2px; }
.app { position: relative; width: 55px; height: 50px; display: flex; align-items: center; justify-content: center; }
.running::after {
  content: "";
  position: absolute;
  left: 23px;
  bottom: 1px;
  width: 8px;
  height: 4px;
  border-radius: 2px;
  background: #b192bb;
}
.current { width: 50px; margin-left: 2.5px; border: 1px solid #673474; border-radius: 5px; }
.current::after { left: 20px; bottom: 0; background: #dd5fe8; }
.profile-dot { position: absolute; left: 25px; top: 3px; }
.tray { margin-left: auto; display: flex; align-items: center; padding-right: 25px; }
.tray-cloud { margin-left: 12px; }
.tray-wifi { margin-left: 14px; }
.tray-vol { margin-left: 10px; }
.tray-battery { margin-left: 9px; }
.clock { width: 94px; display: flex; flex-direction: column; align-items: flex-end; padding-bottom: 2px; line-height: 20px; }
.badge {
  width: 20px;
  height: 20px;
  margin-left: 10px;
  border-radius: 50%;
  background: #dd5fe8;
  color: #2a0b33;
  font-size: 11px;
  line-height: 20px;
  text-align: center;
}
```
